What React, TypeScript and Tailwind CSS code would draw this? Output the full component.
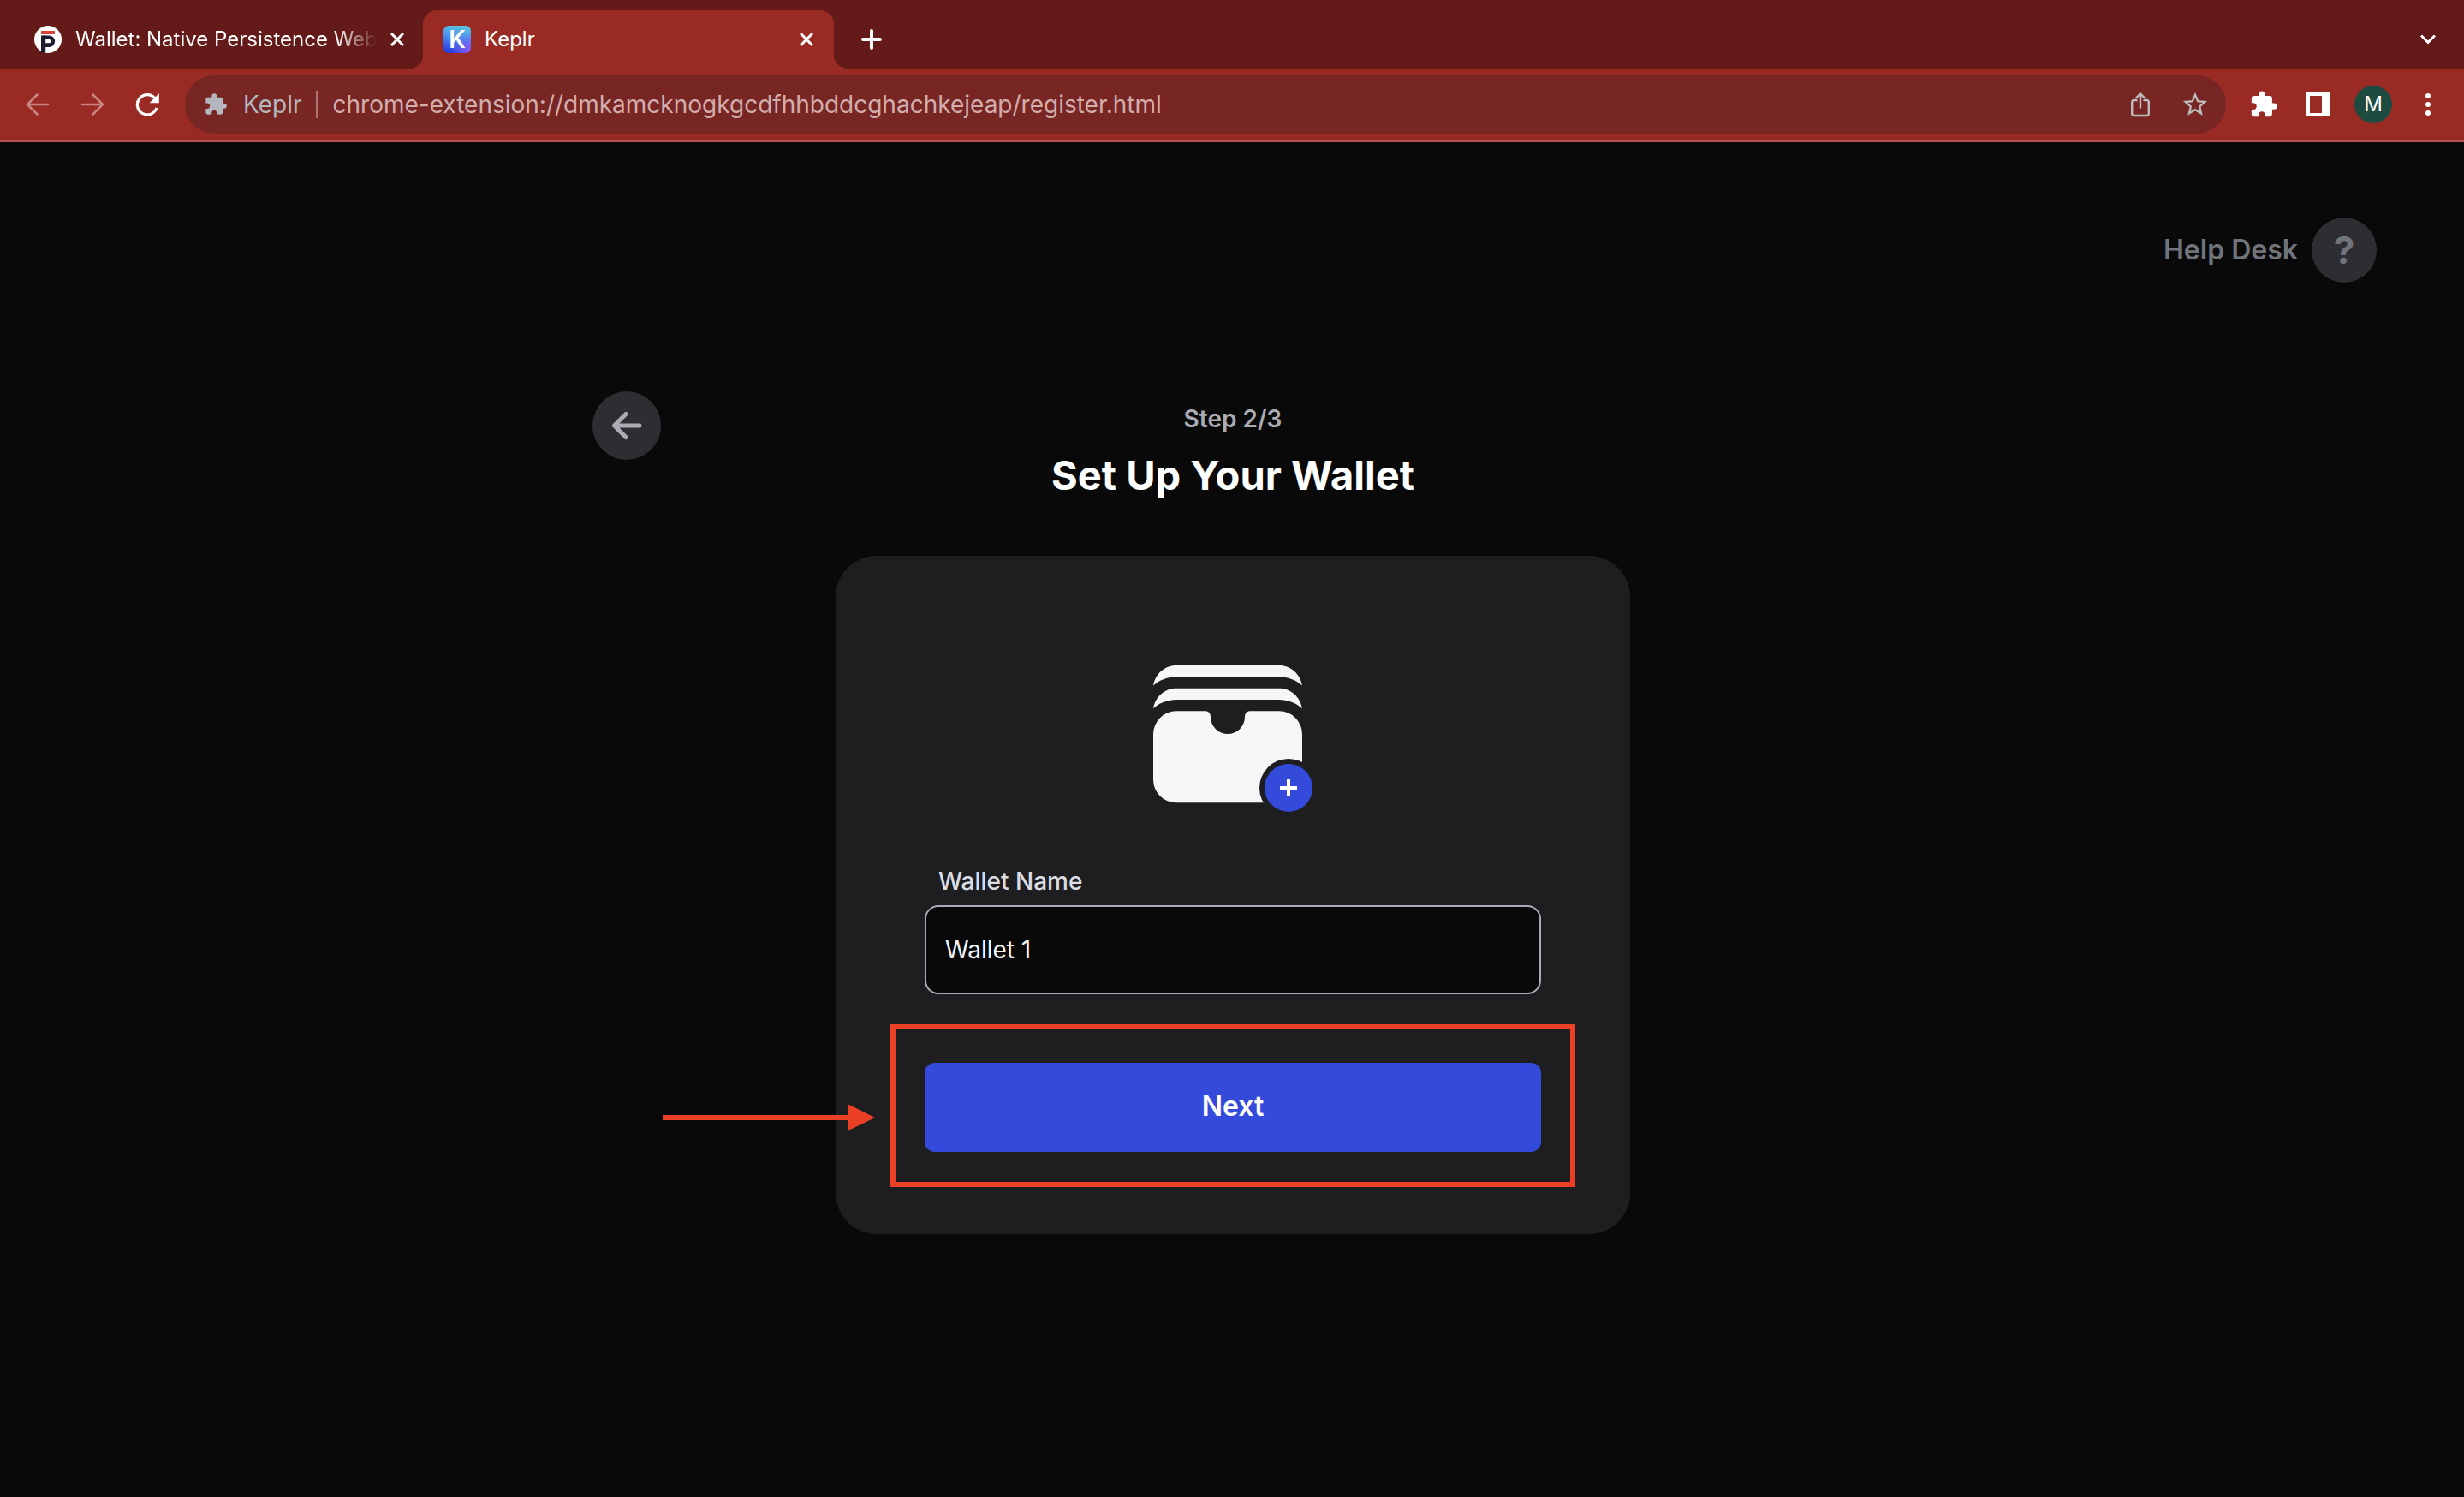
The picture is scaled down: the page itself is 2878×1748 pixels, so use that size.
import { useState } from "react";
import type { ReactNode } from "react";
import { MdExtension, MdStarBorder } from "react-icons/md";

function IconButton({ label, children }: { label: string; children: ReactNode }) {
  return (
    <button type="button" aria-label={label} className="flex size-11 shrink-0 items-center justify-center">
      {children}
    </button>
  );
}

function CloseIcon() {
  return (
    <svg viewBox="0 0 16 16" className="size-4" stroke="currentColor" strokeWidth="3" fill="none" aria-hidden="true">
      <path d="M1 1 15 15M15 1 1 15" />
    </svg>
  );
}

function PersistenceLogo() {
  return (
    <svg viewBox="0 0 32 32" className="size-8 shrink-0" aria-hidden="true">
      <circle cx="16" cy="16" r="16" fill="#ffffff" />
      <rect x="8" y="6" width="16" height="4" fill="#e0403a" />
      <rect x="8" y="11.5" width="5.2" height="20" fill="#1b1c2e" />
      <path d="M10 13.8h7.4a4.2 4.2 0 0 1 0 8.8H13" fill="none" stroke="#1b1c2e" strokeWidth="4.6" />
    </svg>
  );
}

function KeplrLogo() {
  return (
    <span
      aria-hidden="true"
      className="flex size-8 shrink-0 items-center justify-center rounded-md bg-[radial-gradient(circle_at_95%_95%,#8a5cf5_0%,transparent_50%),linear-gradient(190deg,#5cc4dd_5%,#4a8fee_45%,#2a3fe0_90%)] text-[28px] leading-8 font-semibold text-white"
    >
      K
    </span>
  );
}

function TabStrip() {
  return (
    <div className="flex h-20 bg-[#641a18] pt-3 text-white">
      <div className="flex h-[68px] w-[494px] items-center pr-[22px] pl-10">
        <PersistenceLogo />
        <button
          type="button"
          className="ml-4 flex-1 overflow-hidden text-left text-[24px] leading-8 whitespace-nowrap [mask-image:linear-gradient(to_right,black_304px,transparent_352px)]"
        >
          Wallet: Native Persistence Web
        </button>
        <button type="button" aria-label="Close tab" className="ml-4 flex w-4 justify-center">
          <CloseIcon />
        </button>
      </div>
      <div className="relative flex h-[68px] w-[480px] items-center rounded-t-2xl bg-[#992a24] pr-6 pl-6 before:absolute before:bottom-0 before:-left-4 before:size-4 before:bg-[radial-gradient(circle_at_0_0,transparent_16px,#992a24_16px)] after:absolute after:-right-4 after:bottom-0 after:size-4 after:bg-[radial-gradient(circle_at_100%_0,transparent_16px,#992a24_16px)]">
        <KeplrLogo />
        <button type="button" className="ml-4 flex-1 text-left text-[24px] leading-8">
          Keplr
        </button>
        <button type="button" aria-label="Close tab" className="flex w-4 justify-center">
          <CloseIcon />
        </button>
      </div>
      <div className="flex h-[68px] items-center pl-[22px]">
        <IconButton label="New tab">
          <svg viewBox="0 0 24 24" className="size-6" stroke="currentColor" strokeWidth="4" strokeLinecap="round" aria-hidden="true">
            <path d="M12 2v20M2 12h20" />
          </svg>
        </IconButton>
      </div>
      <div className="ml-auto flex h-[68px] items-center pr-5">
        <IconButton label="Search tabs">
          <svg viewBox="0 0 20 12" className="h-3 w-5" fill="none" stroke="currentColor" strokeWidth="3" aria-hidden="true">
            <path d="M2 1.5 10 9.5 18 1.5" />
          </svg>
        </IconButton>
      </div>
    </div>
  );
}

function Toolbar() {
  return (
    <div className="flex h-[86px] items-center gap-5 border-b-2 border-[#b05453] bg-[#992a24] pr-5 pl-[22px] text-white">
      <IconButton label="Back">
        <svg viewBox="0 0 28 28" className="size-7 text-[#c98580]" fill="none" stroke="currentColor" strokeWidth="2.6" strokeLinecap="round" aria-hidden="true">
          <path d="M26 14H2.5M13.5 2.5 2 14l11.500 11.500" />
        </svg>
      </IconButton>
      <IconButton label="Forward">
        <svg viewBox="0 0 28 28" className="size-7 text-[#c98580]" fill="none" stroke="currentColor" strokeWidth="2.6" strokeLinecap="round" aria-hidden="true">
          <path d="M2 14h23.500M14.500 2.500 26 14 14.500 25.500" />
        </svg>
      </IconButton>
      <IconButton label="Reload">
        <svg viewBox="0 0 28 28" className="size-7" fill="none" stroke="currentColor" strokeWidth="3.2" aria-hidden="true">
          <path d="M23 7A11.600 11.600 0 1 0 25 18" />
          <path d="M27.800 1v11.200H16.600z" fill="currentColor" stroke="none" />
        </svg>
      </IconButton>
      <div className="mx-0.5 flex h-[68px] flex-1 items-center rounded-full bg-[#782624] pr-3.5 pl-[22px]">
        <MdExtension className="size-7 shrink-0 text-[#b4b8be]" aria-hidden="true" />
        <label htmlFor="address" className="ml-[18px] text-[28px] leading-9 text-[#b4b8be]">
          Keplr
        </label>
        <span className="ml-4 h-8 w-0.5 bg-[#ae7674]" />
        <input
          id="address"
          type="text"
          readOnly
          value="chrome-extension://dmkamcknogkgcdfhhbddcghachkejeap/register.html"
          className="ml-[18px] h-9 min-w-0 flex-1 bg-transparent text-[28px] leading-9 text-[#d3adac] outline-none"
        />
        <div className="flex gap-5 text-[#bdbdbd]">
          <IconButton label="Share">
            <svg viewBox="0 0 24 30" className="h-[30px] w-6" fill="none" stroke="currentColor" strokeWidth="2.400" aria-hidden="true">
              <path d="M8.500 10H4.500a2.300 2.300 0 0 0-2.300 2.300v13.400A2.300 2.300 0 0 0 4.500 28h15a2.300 2.300 0 0 0 2.300-2.300V12.300A2.300 2.300 0 0 0 19.500 10h-4M12 19.500V3M7 7.500l5-5 5 5" />
            </svg>
          </IconButton>
          <IconButton label="Bookmark this page">
            <MdStarBorder className="size-[34px]" aria-hidden="true" />
          </IconButton>
        </div>
      </div>
      <IconButton label="Extensions">
        <MdExtension className="size-[34px]" aria-hidden="true" />
      </IconButton>
      <IconButton label="Side panel">
        <svg viewBox="0 0 28 28" className="size-7" fill="currentColor" fillRule="evenodd" aria-hidden="true">
          <path d="M0 0h28v28H0zM4 4v20h14V4z" />
        </svg>
      </IconButton>
      <button type="button" aria-label="Profile" className="size-11 shrink-0 rounded-full bg-[#1e4b40] text-[24px] leading-[44px]">
        M
      </button>
      <IconButton label="Menu">
        <svg viewBox="0 0 6 26" className="h-[26px] w-1.5" fill="currentColor" aria-hidden="true">
          <circle cx="3" cy="3" r="3" />
          <circle cx="3" cy="13" r="3" />
          <circle cx="3" cy="23" r="3" />
        </svg>
      </IconButton>
    </div>
  );
}

function WalletIcon() {
  return (
    <svg viewBox="0 0 186 172" className="h-[172px] w-[186px]" aria-hidden="true">
      <g fill="#f6f6f9">
        <path d="M0 23.500C2.500 10 13 0 27 0H147c14 0 24.500 10 27 23.500C166.500 17 157 13.300 147 13.300H27C17 13.300 7.500 17 0 23.500z" />
        <path d="M0 50.200C2.500 36.700 13 26.700 27 26.700H147c14 0 24.500 10 27 23.500C166.500 43.700 157 40 147 40H27C17 40 7.500 43.700 0 50.200z" />
        <path d="M27 53.300H60.500c4 0 6.500 2.700 6.500 6.700a20 20 0 0 0 40 0c0-4 2.500-6.700 6.500-6.700H147a27 27 0 0 1 27 27v53a27 27 0 0 1-27 27H27a27 27 0 0 1-27-27v-53a27 27 0 0 1 27-27z" />
      </g>
      <circle cx="158" cy="143" r="34" fill="#1e1e20" />
      <circle cx="158" cy="143" r="28" fill="#344adb" />
      <path d="M158 133v20M148 143h20" stroke="#ffffff" strokeWidth="4" />
    </svg>
  );
}

function WalletForm() {
  const [name, setName] = useState("Wallet 1");
  return (
    <form
      onSubmit={(event) => event.preventDefault()}
      className="mx-auto mt-16 flex w-full max-w-[928px] flex-col rounded-[48px] bg-[#1e1e20] px-[104px] pt-32 pb-24"
    >
      <div className="flex justify-center">
        <WalletIcon />
      </div>
      <label htmlFor="wallet-name" className="mt-[62px] ml-4 text-[28px] leading-9 font-medium text-[#dcdce3]">
        Wallet Name
      </label>
      <input
        id="wallet-name"
        type="text"
        value={name}
        onChange={(event) => setName(event.target.value)}
        className="mt-2.5 h-[104px] w-full rounded-2xl border-2 border-[#ababb5] bg-[#090909] px-[22px] text-[28px] leading-9 text-[#f6f6f9] outline-none"
      />
      <div className="relative mt-20">
        <button type="submit" className="h-[104px] w-full rounded-xl bg-[#344adb] pb-0.5 text-[32px] leading-10 font-semibold text-white">
          Next
        </button>
        <div className="pointer-events-none absolute -inset-x-10 -top-[45px] -bottom-[41px] border-[6px] border-[#eb4025]" />
        <svg viewBox="0 0 248 32" className="pointer-events-none absolute top-12 right-full mr-[58px] h-8 w-[248px]" fill="#eb4025" aria-hidden="true">
          <path d="M0 13h217V0.500L248 16 217 31V19H0z" />
        </svg>
      </div>
    </form>
  );
}

export default function App() {
  return (
    <div className="flex min-h-screen flex-col bg-[#090909] font-['Inter',sans-serif]">
      <header>
        <TabStrip />
        <Toolbar />
      </header>
      <main className="flex-1 pl-0.5">
        <div className="flex justify-end pt-22 pr-[102px]">
          <a href="#help" className="flex items-center gap-4 text-[32px] leading-10 font-semibold text-[#72747b]">
            Help Desk
            <span className="flex size-[76px] items-center justify-center rounded-full bg-[#2e2e32] text-[44px] leading-[76px] font-bold">?</span>
          </a>
        </div>
        <div className="mx-auto mt-[127px] grid max-w-[1496px] grid-cols-[1fr_auto_1fr] items-start">
          <button type="button" aria-label="Go back" className="flex size-20 items-center justify-center rounded-full bg-[#2e2e32] text-[#ababb5]">
            <svg viewBox="0 0 36 34" className="h-[34px] w-9" fill="none" stroke="currentColor" strokeWidth="5" strokeLinecap="round" strokeLinejoin="round" aria-hidden="true">
              <path d="M33 17H4M17 3.500 3.500 17 17 30.500" />
            </svg>
          </button>
          <div className="pt-3.5 text-center">
            <p className="text-[28px] leading-9 font-semibold text-[#ababb5]">Step 2/3</p>
            <h1 className="mt-[18px] text-[47px] leading-[60px] font-bold text-white">Set Up Your Wallet</h1>
          </div>
        </div>
        <WalletForm />
      </main>
    </div>
  );
}
